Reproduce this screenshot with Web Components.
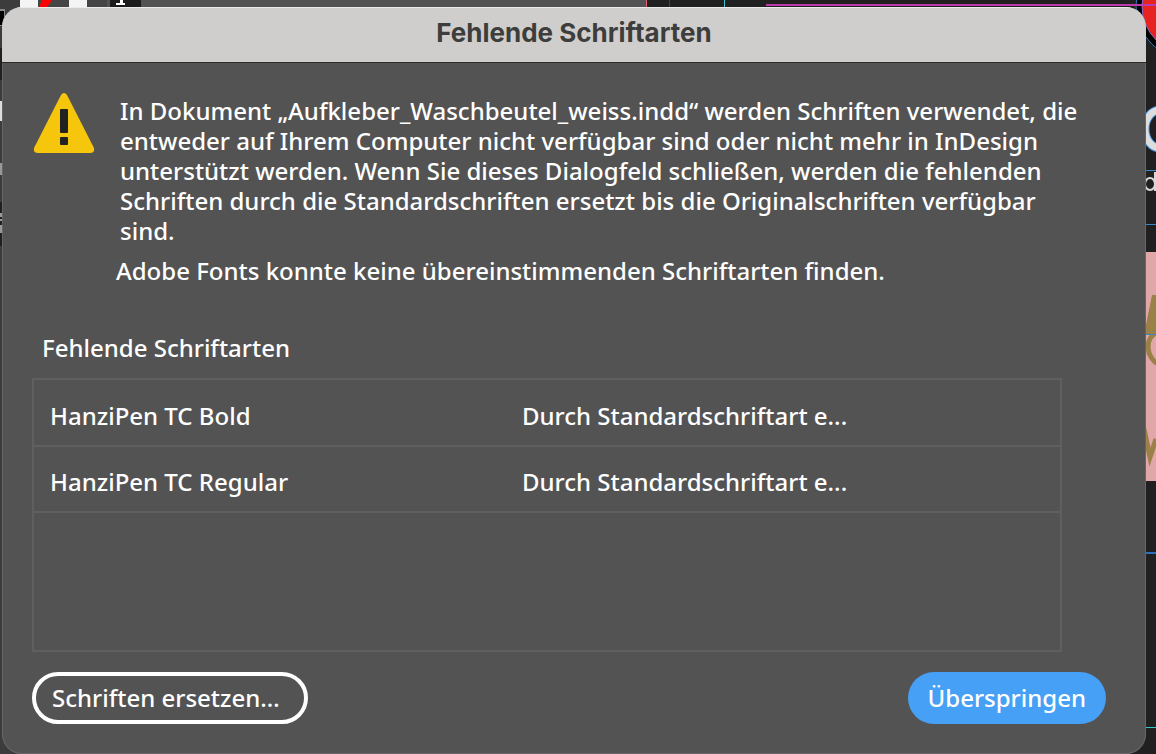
<!DOCTYPE html>
<html lang="de">
<head>
<meta charset="utf-8">
<meta name="viewport" content="width=device-width, initial-scale=1">
<title>Fehlende Schriftarten</title>
<style>
body {
    margin: 0;
    background: #202020;
    color: #fff;
    font: 500 24px/30px "Noto Sans", "Open Sans", sans-serif;
}
</style>
</head>
<body>
<app-workspace>
    <modal-dialog heading="Fehlende Schriftarten">
        <alert-message>
            <p>In Dokument „Aufkleber_Waschbeutel_weiss.indd“ werden Schriften verwendet, die entweder auf Ihrem Computer nicht verfügbar sind oder nicht mehr in InDesign unterstützt werden. Wenn Sie dieses Dialogfeld schließen, werden die fehlenden Schriften durch die Standardschriften ersetzt bis die Originalschriften verfügbar sind.</p>
            <p slot="note">Adobe Fonts konnte keine übereinstimmenden Schriftarten finden.</p>
        </alert-message>
        <font-list label="Fehlende Schriftarten"></font-list>
        <pill-button slot="actions" variant="outline">Schriften ersetzen…</pill-button>
        <pill-button slot="actions" variant="primary">Überspringen</pill-button>
    </modal-dialog>
</app-workspace>

<script>
function attach(el, html) {
    const template = document.createElement("template")
    template.innerHTML = html
    el.attachShadow({mode: "open"}).appendChild(template.content.cloneNode(true))
}

// The document window that stays visible around the dialog
class AppWorkspace extends HTMLElement {
    constructor() {
        super()
        attach(this, `<style>
:host {
    display: flex;
    position: relative;
    box-sizing: border-box;
    min-height: 100vh;
    padding: 7px 10px 0 2px;
    overflow: hidden;
}

svg {
    position: absolute;
    top: 0;
}

.left { left: 0; }
.right { right: 0; }

::slotted(*) {
    position: relative;
    flex: 1;
}
</style>
<svg class="left" width="760" height="754" aria-hidden="true">
    <path fill="#535353" d="M0 0h646v30H0z"/>
    <path fill="#3c3c3c" d="M0 0h20v754H0z"/>
    <path fill="#f4f4f4" d="M20 0h18v8H20zM69 0h18v8H69z"/>
    <path fill="#454545" d="M38 0h31v8H38zM87 0h20v8H87z"/>
    <path fill="#f00" d="M42 0h10c-2 3-4 6-6 8h-8c2-3 3-5 4-8z"/>
    <path fill="#1c1c1c" d="M110 0h31v8h-31z"/>
    <path fill="#fff" d="M120 0h3v3h2v2h-9V3h4z"/>
    <path fill="#888" d="M0 9h5v17H0z"/>
    <path fill="#000" d="M0 11h4v14H0z"/>
    <path fill="#202020" d="M0 48h2v32H0zM0 202h2v44H0z"/>
    <path fill="#ddd" d="M0 101h2v20H0z"/>
    <path fill="#999" d="M0 163h2v12H0zM0 213h2v4H0zM0 219h2v2H0zM0 225h2v8H0z"/>
    <path fill="#e66070" d="M646 0h1v8h-1z"/>
    <path fill="#444" d="M669 0h1v8h-1z"/>
    <path fill="#35c9cc" d="M724 0h1v8h-1z"/>
</svg>
<svg class="right" width="390" height="754" aria-hidden="true">
    <circle cx="424" cy="6" r="54" fill="#000" stroke="#3278bf"/>
    <circle cx="424" cy="6" r="48" fill="#e62320" stroke="#806ac8"/>
    <path stroke="#b93caa" stroke-width="2" d="M0 5h390"/>
    <ellipse cx="394" cy="129" rx="15" ry="19" fill="none" stroke="#3c8cd7" stroke-width="9"/>
    <ellipse cx="394" cy="129" rx="15" ry="19" fill="none" stroke="#ddd" stroke-width="7"/>
    <path stroke="#3c85c8" d="M378 170.500h12M378 224.500h12"/>
    <path fill="none" stroke="#d8d8d8" stroke-width="2" d="M389 172v19"/>
    <ellipse cx="384" cy="184" rx="5" ry="6" fill="none" stroke="#d8d8d8" stroke-width="2"/>
    <path fill="#e0a6a8" d="M378 252h12v229h-12z"/>
    <path fill="#9a8148" d="M386 295h4v40h-12z"/>
    <path fill="none" stroke="#9a8148" stroke-width="5" d="M392 332c-14 5-13 26 2 33M378 429l6 28 6-18"/>
    <path stroke="#3c85b8" d="M378 334.500h12"/>
    <path stroke="#2d70b9" stroke-width="2" d="M380 553h10"/>
    <path stroke="#35c9cc" d="M378 727.500h12"/>
</svg>
<slot></slot>`)
    }
}

class ModalDialog extends HTMLElement {
    constructor() {
        super()
        attach(this, `<style>
:host {
    display: flex;
    flex-direction: column;
    box-sizing: border-box;
    min-width: 0;
    background: #535353;
    border-radius: 20px;
    box-shadow: inset 0 0 0 1px #666;
    overflow: hidden;
}

header {
    box-sizing: border-box;
    height: 56px;
    padding: 10px 16px;
    background: #d0cecd;
    border-top: 1px solid #eceaea;
    border-bottom: 1px solid #2c2c2c;
    color: #3d3d3b;
    text-align: center;
}

h1 {
    margin: 0;
    font: 700 26px/30px Inter, sans-serif;
}

main {
    display: flex;
    flex: 1;
    flex-direction: column;
    padding: 30px 84px 20px 30px;
}

footer {
    display: flex;
    justify-content: space-between;
    padding: 0 40px 30px 30px;
}
</style>
<header><h1 id="heading"></h1></header>
<main><slot></slot></main>
<footer><slot name="actions"></slot></footer>`)
    }

    connectedCallback() {
        const heading = this.getAttribute("heading")
        this.setAttribute("role", "dialog")
        this.setAttribute("aria-label", heading)
        this.shadowRoot.getElementById("heading").textContent = heading
    }
}

class AlertMessage extends HTMLElement {
    constructor() {
        super()
        attach(this, `<style>
:host {
    display: grid;
    grid-template-columns: 60px 1fr;
    column-gap: 24px;
    margin-right: -30px;
}

svg {
    display: block;
    margin-left: 2px;
}

.text {
    padding: 3px 0 0 4px;
}

::slotted(p) {
    margin: 0;
}

.note {
    margin-top: 10px;
}
</style>
<svg width="60" height="60" viewBox="0 0 60 60" role="img" aria-label="Warnung">
    <path fill="#f5c60b" d="M27 2q3-4 6 0l27 53q1 5-4 5H4q-5 0-4-5z"/>
    <rect x="26" y="16" width="8" height="24" rx="1" fill="#222"/>
    <rect x="26" y="44" width="8" height="8" rx="1" fill="#222"/>
</svg>
<div>
    <div class="text"><slot></slot></div>
    <div class="note"><slot name="note"></slot></div>
</div>`)
    }
}

const FONTS = [
    ["HanziPen TC Bold", "Durch Standardschriftart e..."],
    ["HanziPen TC Regular", "Durch Standardschriftart e..."]
]

class FontList extends HTMLElement {
    constructor() {
        super()
        attach(this, `<style>
:host {
    display: flex;
    flex: 1;
    flex-direction: column;
    margin-top: 47px;
}

.frame {
    flex: 1;
    min-height: 200px;
    margin-top: 15px;
    border: 2px solid #5f5f5f;
}

table {
    width: 100%;
    table-layout: fixed;
    border-collapse: collapse;
}

td {
    box-sizing: border-box;
    height: 66px;
    padding: 6px 16px 0;
    border-bottom: 2px solid #5f5f5f;
    white-space: nowrap;
}

td:first-child {
    width: 46%;
}

#label {
    padding-left: 10px;
}
</style>
<div id="label"></div>
<div class="frame"><table aria-labelledby="label"><tbody></tbody></table></div>`)
    }

    connectedCallback() {
        this.shadowRoot.getElementById("label").textContent = this.getAttribute("label")
        const body = this.shadowRoot.querySelector("tbody")
        for (const font of FONTS) {
            const row = body.insertRow()
            font.forEach(text => row.insertCell().textContent = text)
        }
    }
}

class PillButton extends HTMLElement {
    constructor() {
        super()
        attach(this, `<style>
:host {
    display: block;
}

button {
    box-sizing: border-box;
    height: 52px;
    padding: 0 20px;
    border: 0;
    border-radius: 26px;
    background: #46a0f5;
    color: #fff;
    font: inherit;
    white-space: nowrap;
}

:host([variant="outline"]) button {
    min-width: 276px;
    padding: 0 16px;
    border: 4px solid #fff;
    background: none;
    text-align: left;
}
</style>
<button type="button"><slot></slot></button>`)
    }
}

customElements.define("app-workspace", AppWorkspace)
customElements.define("modal-dialog", ModalDialog)
customElements.define("alert-message", AlertMessage)
customElements.define("font-list", FontList)
customElements.define("pill-button", PillButton)
</script>
</body>
</html>
